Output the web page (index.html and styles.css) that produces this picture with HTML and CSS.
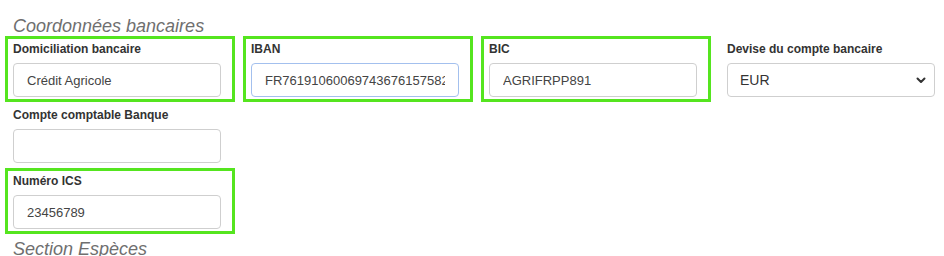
FILE: index.html
```html
<!DOCTYPE html>
<html lang="fr">
  <head>
    <meta charset="UTF-8">
    <meta name="viewport" content="width=device-width, initial-scale=1.0">
    <title>Coordonnées bancaires</title>
    <link rel="stylesheet" href="styles.css">
  </head>
  <body>
    <div class="section">
      <h3 class="section-title">Coordonnées bancaires</h3>

      <div class="row">
        <div class="field highlight">
          <label class="field-label">Domiciliation bancaire</label>
          <input class="field-input" type="text" value="Crédit Agricole">
        </div>
        <div class="field highlight">
          <label class="field-label">IBAN</label>
          <input class="field-input focused" type="text" value="FR7619106006974367615758251">
        </div>
        <div class="field highlight">
          <label class="field-label">BIC</label>
          <input class="field-input" type="text" value="AGRIFRPP891">
        </div>
        <div class="field">
          <label class="field-label">Devise du compte bancaire</label>
          <div class="select-wrap">
            <select class="field-input field-select">
              <option>EUR</option>
              <option>USD</option>
            </select>
            <svg class="select-arrow" width="10" height="7" viewBox="0 0 10 7">
              <path d="M1.5 1.5 L5 5 L8.5 1.5" fill="none" stroke="#333" stroke-width="2" stroke-linecap="round" stroke-linejoin="round"/>
            </svg>
          </div>
        </div>
      </div>

      <div class="field">
        <label class="field-label">Compte comptable Banque</label>
        <input class="field-input" type="text" value="">
      </div>

      <div class="field highlight">
        <label class="field-label">Numéro ICS</label>
        <input class="field-input" type="text" value="23456789">
      </div>

      <h3 class="section-title next">Section Espèces</h3>
    </div>
  </body>
</html>
```

FILE: styles.css
```css
body {
    margin: 0;
    background-color: white;
    font-family: "Liberation Sans", Arial, Helvetica, sans-serif;
}

.section {
    padding-left: 5px;
    padding-top: 17px;
}

.section-title {
    margin: 0 0 0 8px;
    font-size: 18px;
    line-height: 19px;
    font-weight: normal;
    font-style: italic;
    color: #6f6f6f;
}

.section-title.next {
    margin-top: 6px;
}

.row {
    display: grid;
    grid-template-columns: repeat(4, 230px);
    column-gap: 8px;
}

.field {
    width: 230px;
    box-sizing: border-box;
    border: 3px solid transparent;
    padding: 3px 0 2px 5px;
}

.field.highlight {
    border-color: #55e51f;
}

.field-label {
    display: block;
    font-size: 12px;
    line-height: 15px;
    font-weight: bold;
    color: #333;
    margin-bottom: 6px;
}

.field-input {
    display: block;
    width: 208px;
    height: 34px;
    box-sizing: border-box;
    padding: 0 13px;
    border: 1px solid #cfcfcf;
    border-radius: 4px;
    background-color: white;
    font-family: "Liberation Sans", Arial, sans-serif;
    font-size: 13px;
    color: #444;
    outline: none;
}

.field-input.focused {
    border-color: #a3c0ee;
}

.select-wrap {
    position: relative;
    width: 208px;
}

.field-select {
    appearance: none;
    -webkit-appearance: none;
    padding: 0 12px;
    font-size: 14px;
    color: #333;
}

.select-arrow {
    position: absolute;
    right: 9px;
    top: 14px;
    pointer-events: none;
}
```
